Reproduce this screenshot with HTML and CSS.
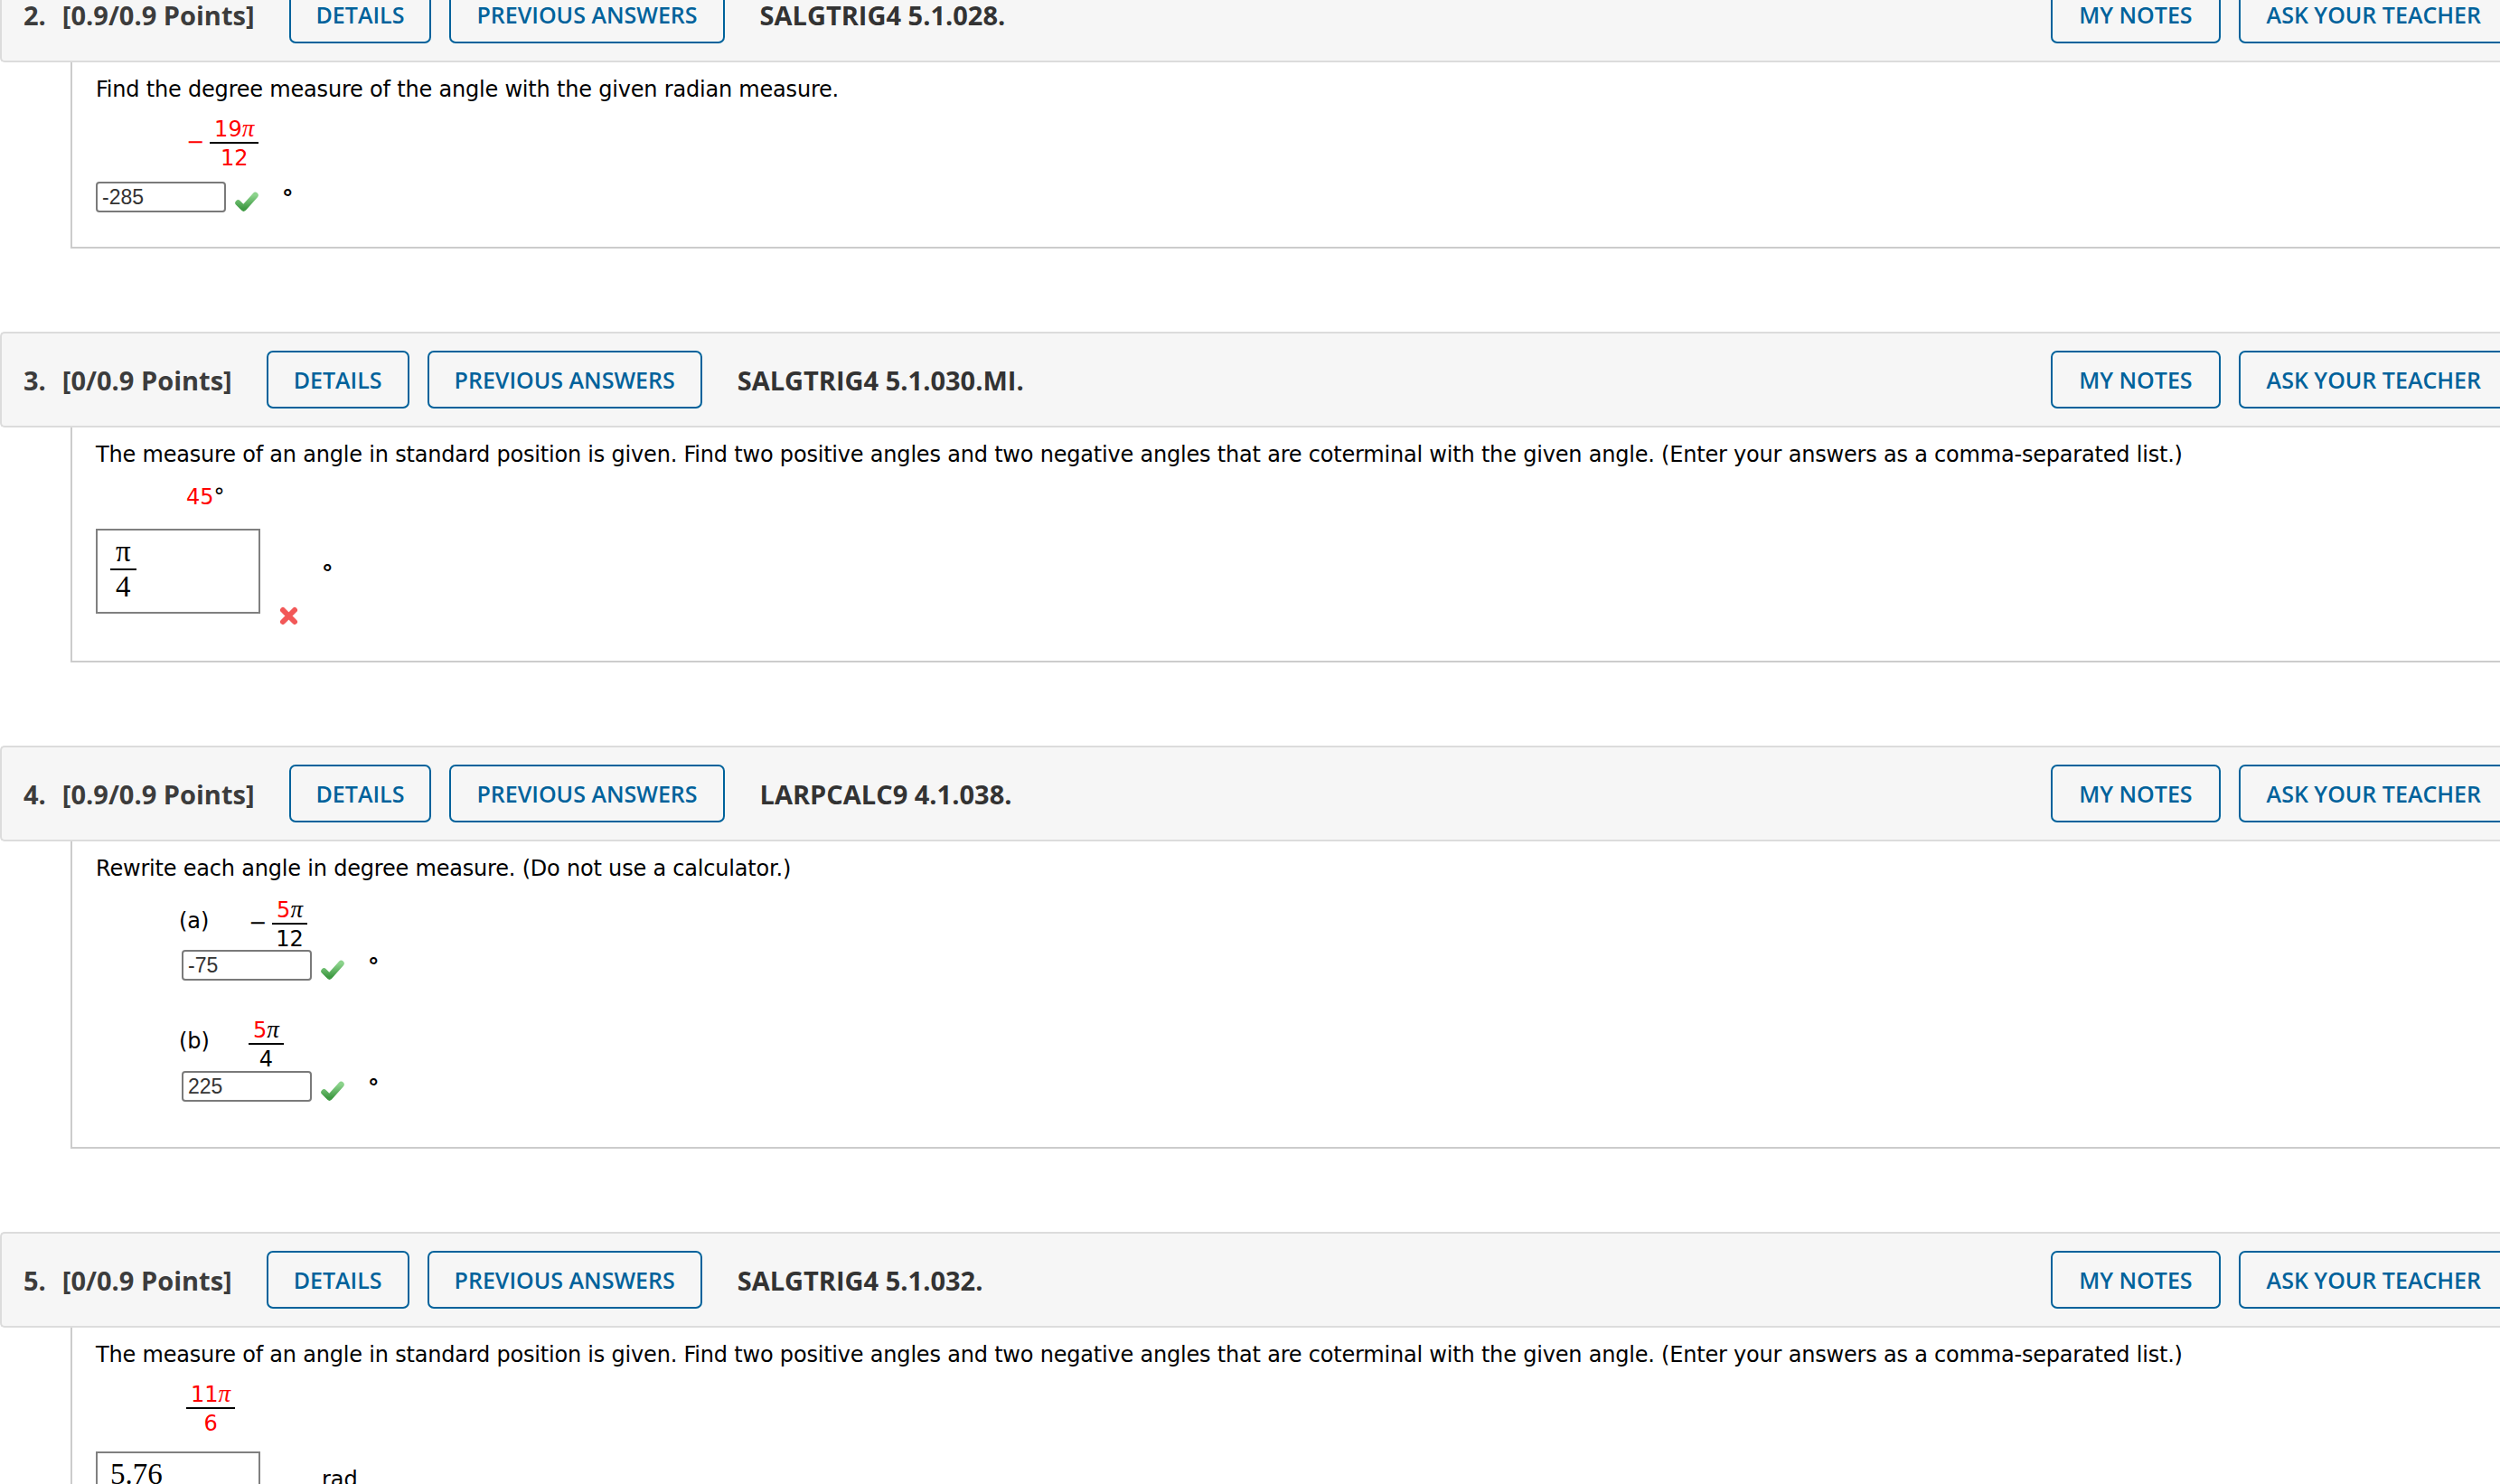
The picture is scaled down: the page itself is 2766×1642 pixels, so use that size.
FILE: index.html
```html
<!DOCTYPE html>
<html lang="en">
<head>
<meta charset="utf-8">
<title>Assignment</title>
<link rel="stylesheet" href="styles.css">
</head>
<body>
<svg class="defs" width="0" height="0" aria-hidden="true">
  <defs>
    <linearGradient id="chk" x1="0" y1="0" x2="0" y2="1">
      <stop offset="0" stop-color="#8cd38c"/>
      <stop offset="1" stop-color="#3f9a43"/>
    </linearGradient>
  </defs>
</svg>
<div class="page">

  <section class="question">
    <div class="qhead">
      <span class="qnum">2.</span>
      <span class="qpts">[0.9/0.9 Points]</span>
      <button class="btn">DETAILS</button>
      <button class="btn">PREVIOUS ANSWERS</button>
      <span class="qid">SALGTRIG4 5.1.028.</span>
      <div class="tools">
        <button class="btn">MY NOTES</button>
        <button class="btn">ASK YOUR TEACHER</button>
      </div>
    </div>
    <div class="qbody">
      <p class="prompt">Find the degree measure of the angle with the given radian measure.</p>
      <div class="math m-q2">
        <span class="minus">−</span>
        <span class="frac"><span class="num">19<span class="pi">π</span></span><span class="den">12</span></span>
      </div>
      <div class="answer m-ans">
        <span class="field">-285</span>
        <svg class="check" viewBox="0 0 26 22"><path d="M3.5 12.5 L9.5 18.5 L22.5 4" fill="none" stroke="url(#chk)" stroke-width="6.5" stroke-linecap="round" stroke-linejoin="round"/></svg>
        <span class="deg">°</span>
      </div>
    </div>
  </section>

  <section class="question">
    <div class="qhead">
      <span class="qnum">3.</span>
      <span class="qpts">[0/0.9 Points]</span>
      <button class="btn">DETAILS</button>
      <button class="btn">PREVIOUS ANSWERS</button>
      <span class="qid">SALGTRIG4 5.1.030.MI.</span>
      <div class="tools">
        <button class="btn">MY NOTES</button>
        <button class="btn">ASK YOUR TEACHER</button>
      </div>
    </div>
    <div class="qbody">
      <p class="prompt">The measure of an angle in standard position is given. Find two positive angles and two negative angles that are coterminal with the given angle. (Enter your answers as a comma-separated list.)</p>
      <div class="math m-q3"><span class="red">45</span><span class="blk">°</span></div>
      <div class="answer m-ans3">
        <div class="mjbox">
          <span class="mjfrac"><span class="num">π</span><span class="den">4</span></span>
        </div>
        <svg class="xmark" viewBox="0 0 23 23"><path d="M5 5 L18 18 M18 5 L5 18" fill="none" stroke="#f25858" stroke-width="6" stroke-linecap="round"/></svg>
        <span class="deg deg-mj">°</span>
      </div>
    </div>
  </section>

  <section class="question">
    <div class="qhead">
      <span class="qnum">4.</span>
      <span class="qpts">[0.9/0.9 Points]</span>
      <button class="btn">DETAILS</button>
      <button class="btn">PREVIOUS ANSWERS</button>
      <span class="qid">LARPCALC9 4.1.038.</span>
      <div class="tools">
        <button class="btn">MY NOTES</button>
        <button class="btn">ASK YOUR TEACHER</button>
      </div>
    </div>
    <div class="qbody qbody-parts">
      <p class="prompt">Rewrite each angle in degree measure. (Do not use a calculator.)</p>
      <div class="part part-a">
        <div class="part-head">
          <span class="plabel">(a)</span>
          <span class="minus">−</span>
          <span class="frac"><span class="num"><span class="red">5</span><span class="pi">π</span></span><span class="den">12</span></span>
        </div>
        <div class="answer m-part">
          <span class="field">-75</span>
          <svg class="check" viewBox="0 0 26 22"><path d="M3.5 12.5 L9.5 18.5 L22.5 4" fill="none" stroke="url(#chk)" stroke-width="6.5" stroke-linecap="round" stroke-linejoin="round"/></svg>
          <span class="deg">°</span>
        </div>
      </div>
      <div class="part part-b">
        <div class="part-head">
          <span class="plabel">(b)</span>
          <span class="frac"><span class="num"><span class="red">5</span><span class="pi">π</span></span><span class="den">4</span></span>
        </div>
        <div class="answer m-part-b">
          <span class="field">225</span>
          <svg class="check" viewBox="0 0 26 22"><path d="M3.5 12.5 L9.5 18.5 L22.5 4" fill="none" stroke="url(#chk)" stroke-width="6.5" stroke-linecap="round" stroke-linejoin="round"/></svg>
          <span class="deg">°</span>
        </div>
      </div>
    </div>
  </section>

  <section class="question">
    <div class="qhead">
      <span class="qnum">5.</span>
      <span class="qpts">[0/0.9 Points]</span>
      <button class="btn">DETAILS</button>
      <button class="btn">PREVIOUS ANSWERS</button>
      <span class="qid">SALGTRIG4 5.1.032.</span>
      <div class="tools">
        <button class="btn">MY NOTES</button>
        <button class="btn">ASK YOUR TEACHER</button>
      </div>
    </div>
    <div class="qbody">
      <p class="prompt">The measure of an angle in standard position is given. Find two positive angles and two negative angles that are coterminal with the given angle. (Enter your answers as a comma-separated list.)</p>
      <div class="math m-q5">
        <span class="frac"><span class="num">11<span class="pi">π</span></span><span class="den">6</span></span>
      </div>
      <div class="answer m-ans5">
        <div class="mjbox"><span class="mjtext">5.76</span></div>
        <svg class="xmark" viewBox="0 0 23 23"><path d="M5 5 L18 18 M18 5 L5 18" fill="none" stroke="#f25858" stroke-width="6" stroke-linecap="round"/></svg>
        <span class="unit">rad</span>
      </div>
    </div>
  </section>

</div>
</body>
</html>
```

FILE: styles.css
```css
html, body {
  margin: 0;
  padding: 0;
  overflow: hidden;
  background: #ffffff;
}

body {
  font-family: "DejaVu Sans", Verdana, sans-serif;
  font-size: 24px;
  color: #000;
}

.defs {
  position: absolute;
  width: 0;
  height: 0;
}

.page {
  width: 2776px;
  margin-top: -37px;
}

.question {
  margin-bottom: 92px;
}

/* ---------- header bar ---------- */
.qhead {
  display: flex;
  align-items: center;
  height: 102px;
  background: #f6f6f6;
  border-top: 2px solid #dcdcdc;
  border-bottom: 2px solid #dcdcdc;
  border-left: 2px solid #dcdcdc;
  border-radius: 5px 0 0 5px;
  padding-left: 24px;
  font-family: "Open Sans", "Liberation Sans", sans-serif;
}

.qnum,
.qpts,
.qid {
  font-size: 29px;
  font-weight: 700;
  color: #3c3c3c;
  white-space: nowrap;
}

.qnum {
  margin-right: 18px;
}

.qpts {
  margin-right: 38px;
}

.qid {
  margin-left: 19px;
  color: #333;
}

.btn {
  display: flex;
  align-items: center;
  box-sizing: border-box;
  height: 64px;
  margin: 0 20px 0 0;
  padding: 0 28px;
  border: 2px solid #00629b;
  border-radius: 7px;
  background: transparent;
  color: #00629b;
  font-family: "Open Sans", "Liberation Sans", sans-serif;
  font-size: 25px;
  font-weight: 600;
  white-space: nowrap;
}

.tools {
  display: flex;
  gap: 20px;
  margin-left: auto;
}

.tools .btn {
  margin: 0;
  padding: 0 29px;
}

/* ---------- question body ---------- */
.qbody {
  margin-left: 78px;
  border-left: 2px solid #cccccc;
  border-bottom: 2px solid #cccccc;
  padding: 15px 0 38px 26px;
}

.qbody-parts {
  padding-bottom: 50px;
}

.prompt {
  margin: 0;
  line-height: 30px;
  letter-spacing: -0.2px;
  white-space: nowrap;
}

.math {
  display: flex;
  align-items: center;
  padding-left: 100px;
  line-height: 28px;
  color: #ff0000;
}

.m-q2 { margin-top: 14px; }
.m-q3 { margin-top: 18px; }
.m-q5 { margin-top: 14px; }

.red { color: #ff0000; }
.blk { color: #000; }

.minus {
  margin-right: 6px;
  margin-bottom: 4px;
}

.frac {
  display: inline-flex;
  flex-direction: column;
  text-align: center;
  line-height: 28px;
}

.frac .num {
  padding: 0 5px;
  border-bottom: 2px solid #000;
}

.frac .den {
  padding-top: 2px;
}

.pi {
  font-family: "Liberation Serif", "Times New Roman", serif;
  font-style: italic;
  font-size: 27px;
}

/* ---------- answers ---------- */
.answer {
  display: flex;
  align-items: flex-start;
}

.m-ans { margin-top: 12px; }
.m-ans3 { margin-top: 21px; }
.m-ans5 { margin-top: 17px; }
.m-part { margin-top: -2px; }
.m-part-b { margin-top: -1px; }

.field {
  box-sizing: border-box;
  width: 144px;
  height: 34px;
  border: 2px solid #7a7a7a;
  border-radius: 4px;
  padding-left: 5px;
  font-family: "Liberation Sans", Arial, sans-serif;
  font-size: 23px;
  line-height: 30px;
  color: #333;
}

.check {
  width: 26px;
  height: 22px;
  margin: 11px 0 0 10px;
  flex: none;
}

.xmark {
  width: 23px;
  height: 23px;
  margin: 85px 0 0 20px;
  flex: none;
  filter: blur(0.4px);
}

.deg {
  line-height: 1;
  font-size: 25px;
  font-weight: 700;
  margin: 6px 0 0 26px;
}

.deg-mj {
  margin: 37px 0 0 25px;
}

.unit {
  line-height: 1;
  margin: 19px 0 0 25px;
}

.mjbox {
  box-sizing: border-box;
  width: 182px;
  height: 94px;
  border: 2px solid #808080;
  padding: 7px 0 0 14px;
  font-family: "Liberation Serif", "Times New Roman", serif;
  font-size: 33px;
  line-height: 33px;
  color: #000;
  flex: none;
}

.mjfrac {
  display: inline-flex;
  flex-direction: column;
  text-align: center;
}

.mjfrac .num {
  padding: 0 6px 2px;
  border-bottom: 2px solid #000;
}

.mjfrac .den {
  padding-top: 2px;
}

/* ---------- parts (a), (b) ---------- */
.part {
  padding-left: 95px;
}

.part-a { margin-top: 16px; }
.part-b { margin-top: 40px; }

.part-head {
  display: flex;
  align-items: center;
  line-height: 28px;
}

.plabel {
  width: 77px;
  margin-left: -3px;
  margin-bottom: 8px;
}
```
